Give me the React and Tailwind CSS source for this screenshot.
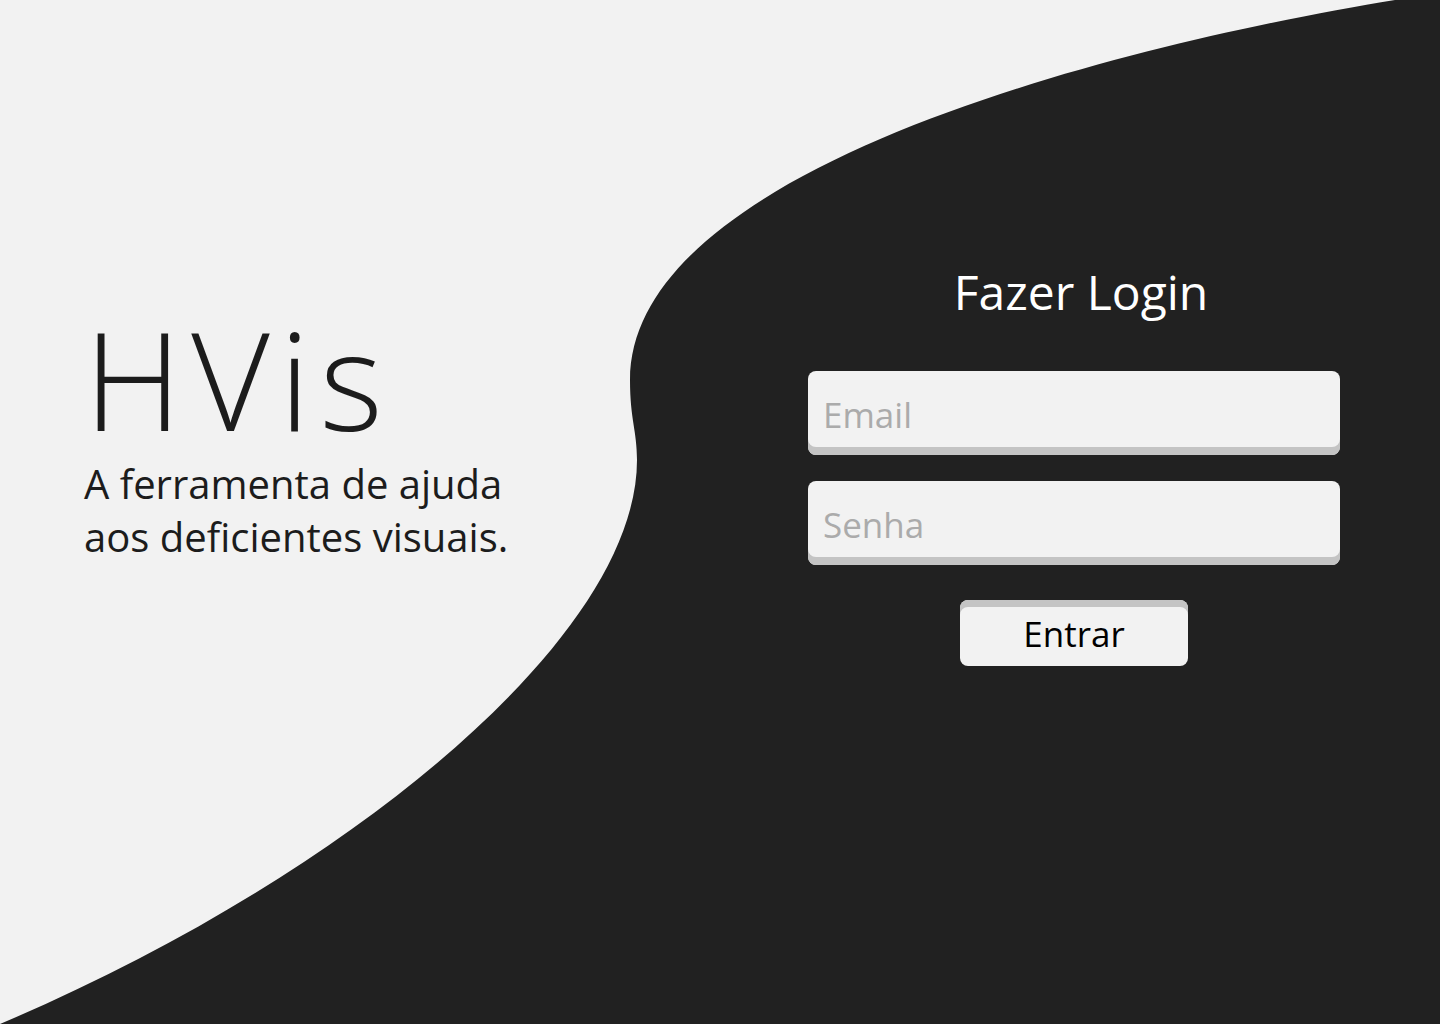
import { useState } from 'react';

// Tela de login do HVis: fundo claro com a onda escura à direita
function Wave() {
  return (
    <svg
      className="absolute inset-0 w-full h-full"
      viewBox="0 0 1440 1024"
      preserveAspectRatio="none"
      aria-hidden="true"
    >
      <path
        fill="#212121"
        d="M1395 0 C1150 40 630 160 630 380 C630 420 637 430 637 460 C637 640 340 880 0 1024 L1440 1024 L1440 0 Z"
      />
    </svg>
  );
}

function Field({ placeholder, type = 'text', value, onChange }) {
  return (
    <input
      type={type}
      value={value}
      onChange={(e) => onChange(e.target.value)}
      placeholder={placeholder}
      className="w-full h-[84px] rounded-lg bg-[#f2f2f2] px-[15px] pt-[10px] pb-[8px] text-[35px] text-[#212121] placeholder:text-[#ababab] shadow-[inset_0_-8px_0_#c4c4c4] outline-none"
    />
  );
}

export default function App() {
  const [email, setEmail] = useState('');
  const [senha, setSenha] = useState('');

  return (
    <div
      className="relative w-full h-screen min-h-[1024px] overflow-hidden bg-[#f2f2f2]"
      style={{ fontFamily: '"Open Sans", "Noto Sans", sans-serif' }}
    >
      <Wave />

      <div className="relative flex h-full">
        {/* Lado esquerdo — marca */}
        <div className="w-[808px] pl-[84px] pt-[311px] text-[#1c1c1c]">
          <h1 className="h-[136px] text-[136px] leading-none font-light tracking-[0.07em]">HVis</h1>
          <p className="mt-[10px] text-[40px] leading-[53px]">
            A ferramenta de ajuda
            <br />
            aos deficientes visuais.
          </p>
        </div>

        {/* Lado direito — formulário */}
        <form
          className="w-[532px] pt-[268px] flex flex-col items-center"
          onSubmit={(e) => e.preventDefault()}
        >
          <h2 className="pl-[14px] text-[48px] leading-none text-white">Fazer Login</h2>
          <div className="mt-[55px] w-full flex flex-col gap-[26px]">
            <Field placeholder="Email" type="email" value={email} onChange={setEmail} />
            <Field placeholder="Senha" type="password" value={senha} onChange={setSenha} />
          </div>
          <button
            type="submit"
            className="mt-[35px] w-[228px] h-[66px] rounded-lg bg-[#f2f2f2] pt-[2px] text-[35px] text-black shadow-[inset_0_7px_0_#c4c4c4]"
          >
            Entrar
          </button>
        </form>
      </div>
    </div>
  );
}
